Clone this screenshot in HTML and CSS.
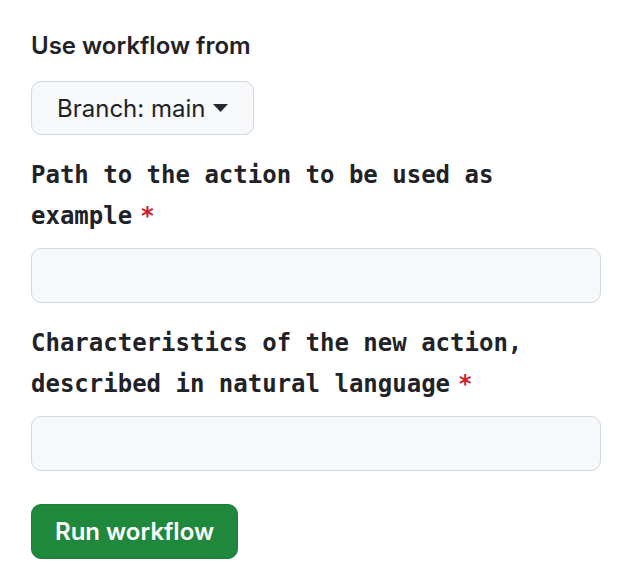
FILE: index.html
```html
<!DOCTYPE html>
<html>
<head>
<meta charset="utf-8">
<link rel="stylesheet" href="styles.css">
</head>
<body>
<form class="panel">
  <div class="title">Use workflow from</div>
  <button type="button" class="branch-btn">
    <span class="branch-text">Branch: main</span>
    <svg class="caret" width="15" height="8" viewBox="0 0 15 8"><path d="M0 0 L15 0 L7.5 8 Z" fill="#24292f"/></svg>
  </button>
  <div class="field">
    <label class="label">Path to the action to be used as example<span class="req">*</span></label>
    <input class="input" type="text">
  </div>
  <div class="field">
    <label class="label">Characteristics of the new action, described in natural language<span class="req">*</span></label>
    <input class="input" type="text">
  </div>
  <button type="button" class="run-btn">Run workflow</button>
</form>
</body>
</html>
```
FILE: styles.css
```css
html, body {
  margin: 0;
  padding: 0;
  background: #ffffff;
}
body {
  font-family: Inter, "Liberation Sans", sans-serif;
  color: #1f2328;
}
.panel {
  width: 570px;
  padding: 30px 0 0 31px;
  display: flex;
  flex-direction: column;
  align-items: flex-start;
}
.title {
  font-size: 24px;
  font-weight: 600;
  line-height: 32px;
  color: #1f2328;
}
.branch-btn {
  margin-top: 19px;
  height: 54px;
  box-sizing: border-box;
  display: flex;
  align-items: center;
  gap: 8px;
  padding: 0 25px 0 25px;
  background: #f6f8fa;
  border: 1px solid #d0d7de;
  border-radius: 10px;
  font-family: Inter, "Liberation Sans", sans-serif;
  font-size: 24px;
  font-weight: 400;
  color: #1f2328;
}
.caret {
  display: block;
}
.field {
  width: 100%;
  margin-top: 20px;
  display: flex;
  flex-direction: column;
}
.label {
  font-family: "DejaVu Sans Mono", "Liberation Mono", monospace;
  font-size: 24px;
  font-weight: 700;
  line-height: 41px;
  color: #1f2328;
  width: 520px;
}
.req {
  color: #cf222e;
  margin-left: 8px;
}
.input {
  margin-top: 11px;
  width: 100%;
  height: 55px;
  box-sizing: border-box;
  background: #f6f8fa;
  border: 1px solid #d0d7de;
  border-radius: 10px;
  padding: 0 14px;
  font-size: 22px;
}
.run-btn {
  margin-top: 33px;
  height: 55px;
  box-sizing: border-box;
  padding: 0 23px;
  background: #1f883d;
  border: 1px solid #1a7f37;
  border-radius: 10px;
  color: #ffffff;
  font-family: Inter, "Liberation Sans", sans-serif;
  font-size: 24px;
  font-weight: 600;
}
```
